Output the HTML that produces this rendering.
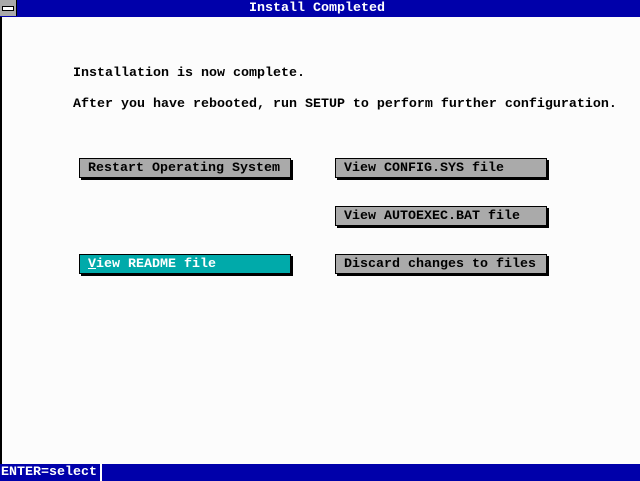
<!DOCTYPE html>
<html><head><style>
body{margin:0;width:640px;height:481px;background:#fcfcfc;position:relative;overflow:hidden;font-family:"Liberation Mono",monospace;font-size:13.33px;font-weight:bold;}
.t{position:absolute;white-space:pre;line-height:16px;}
#title{position:absolute;left:0;top:0;width:640px;height:17px;background:#0000aa;color:#fff;}
#box{position:absolute;left:0;top:0;width:16px;height:16px;background:#aaa;border-right:1px solid #000;}
#box i{position:absolute;left:2px;top:6px;width:10px;height:3px;border:1px solid #000;background:#fff;}
.b{position:absolute;width:210px;height:18px;background:#aaa;border:1px solid #000;box-shadow:2px 2px 0 #000;}
.b span{position:absolute;left:8px;top:2px;white-space:pre;line-height:16px;}
.sel{background:#00aaaa;color:#fff;}
#st{position:absolute;left:0;top:464px;width:640px;height:17px;background:#0000aa;color:#fff;}
</style></head><body>
<div style="position:absolute;left:0;top:17px;width:2px;height:447px;background:#000"></div>
<div id="title"><div id="box"><i></i></div><div class="t" style="left:249px;top:1px">Install Completed</div></div>
<div class="t" style="left:73px;top:66px">Installation is now complete.</div>
<div class="t" style="left:73px;top:97px">After you have rebooted, run SETUP to perform further configuration.</div>
<div class="b" style="left:79px;top:158px"><span>Restart Operating System</span></div>
<div class="b" style="left:335px;top:158px"><span>View CONFIG.SYS file</span></div>
<div class="b" style="left:335px;top:206px"><span>View AUTOEXEC.BAT file</span></div>
<div class="b sel" style="left:79px;top:254px"><span><u>V</u>iew README file</span></div>
<div class="b" style="left:335px;top:254px"><span>Discard changes to files</span></div>
<div id="st"><div class="t" style="left:1px;top:1px">ENTER=select</div><div style="position:absolute;left:100px;top:0;width:2px;height:17px;background:#fff"></div></div>
</body></html>
